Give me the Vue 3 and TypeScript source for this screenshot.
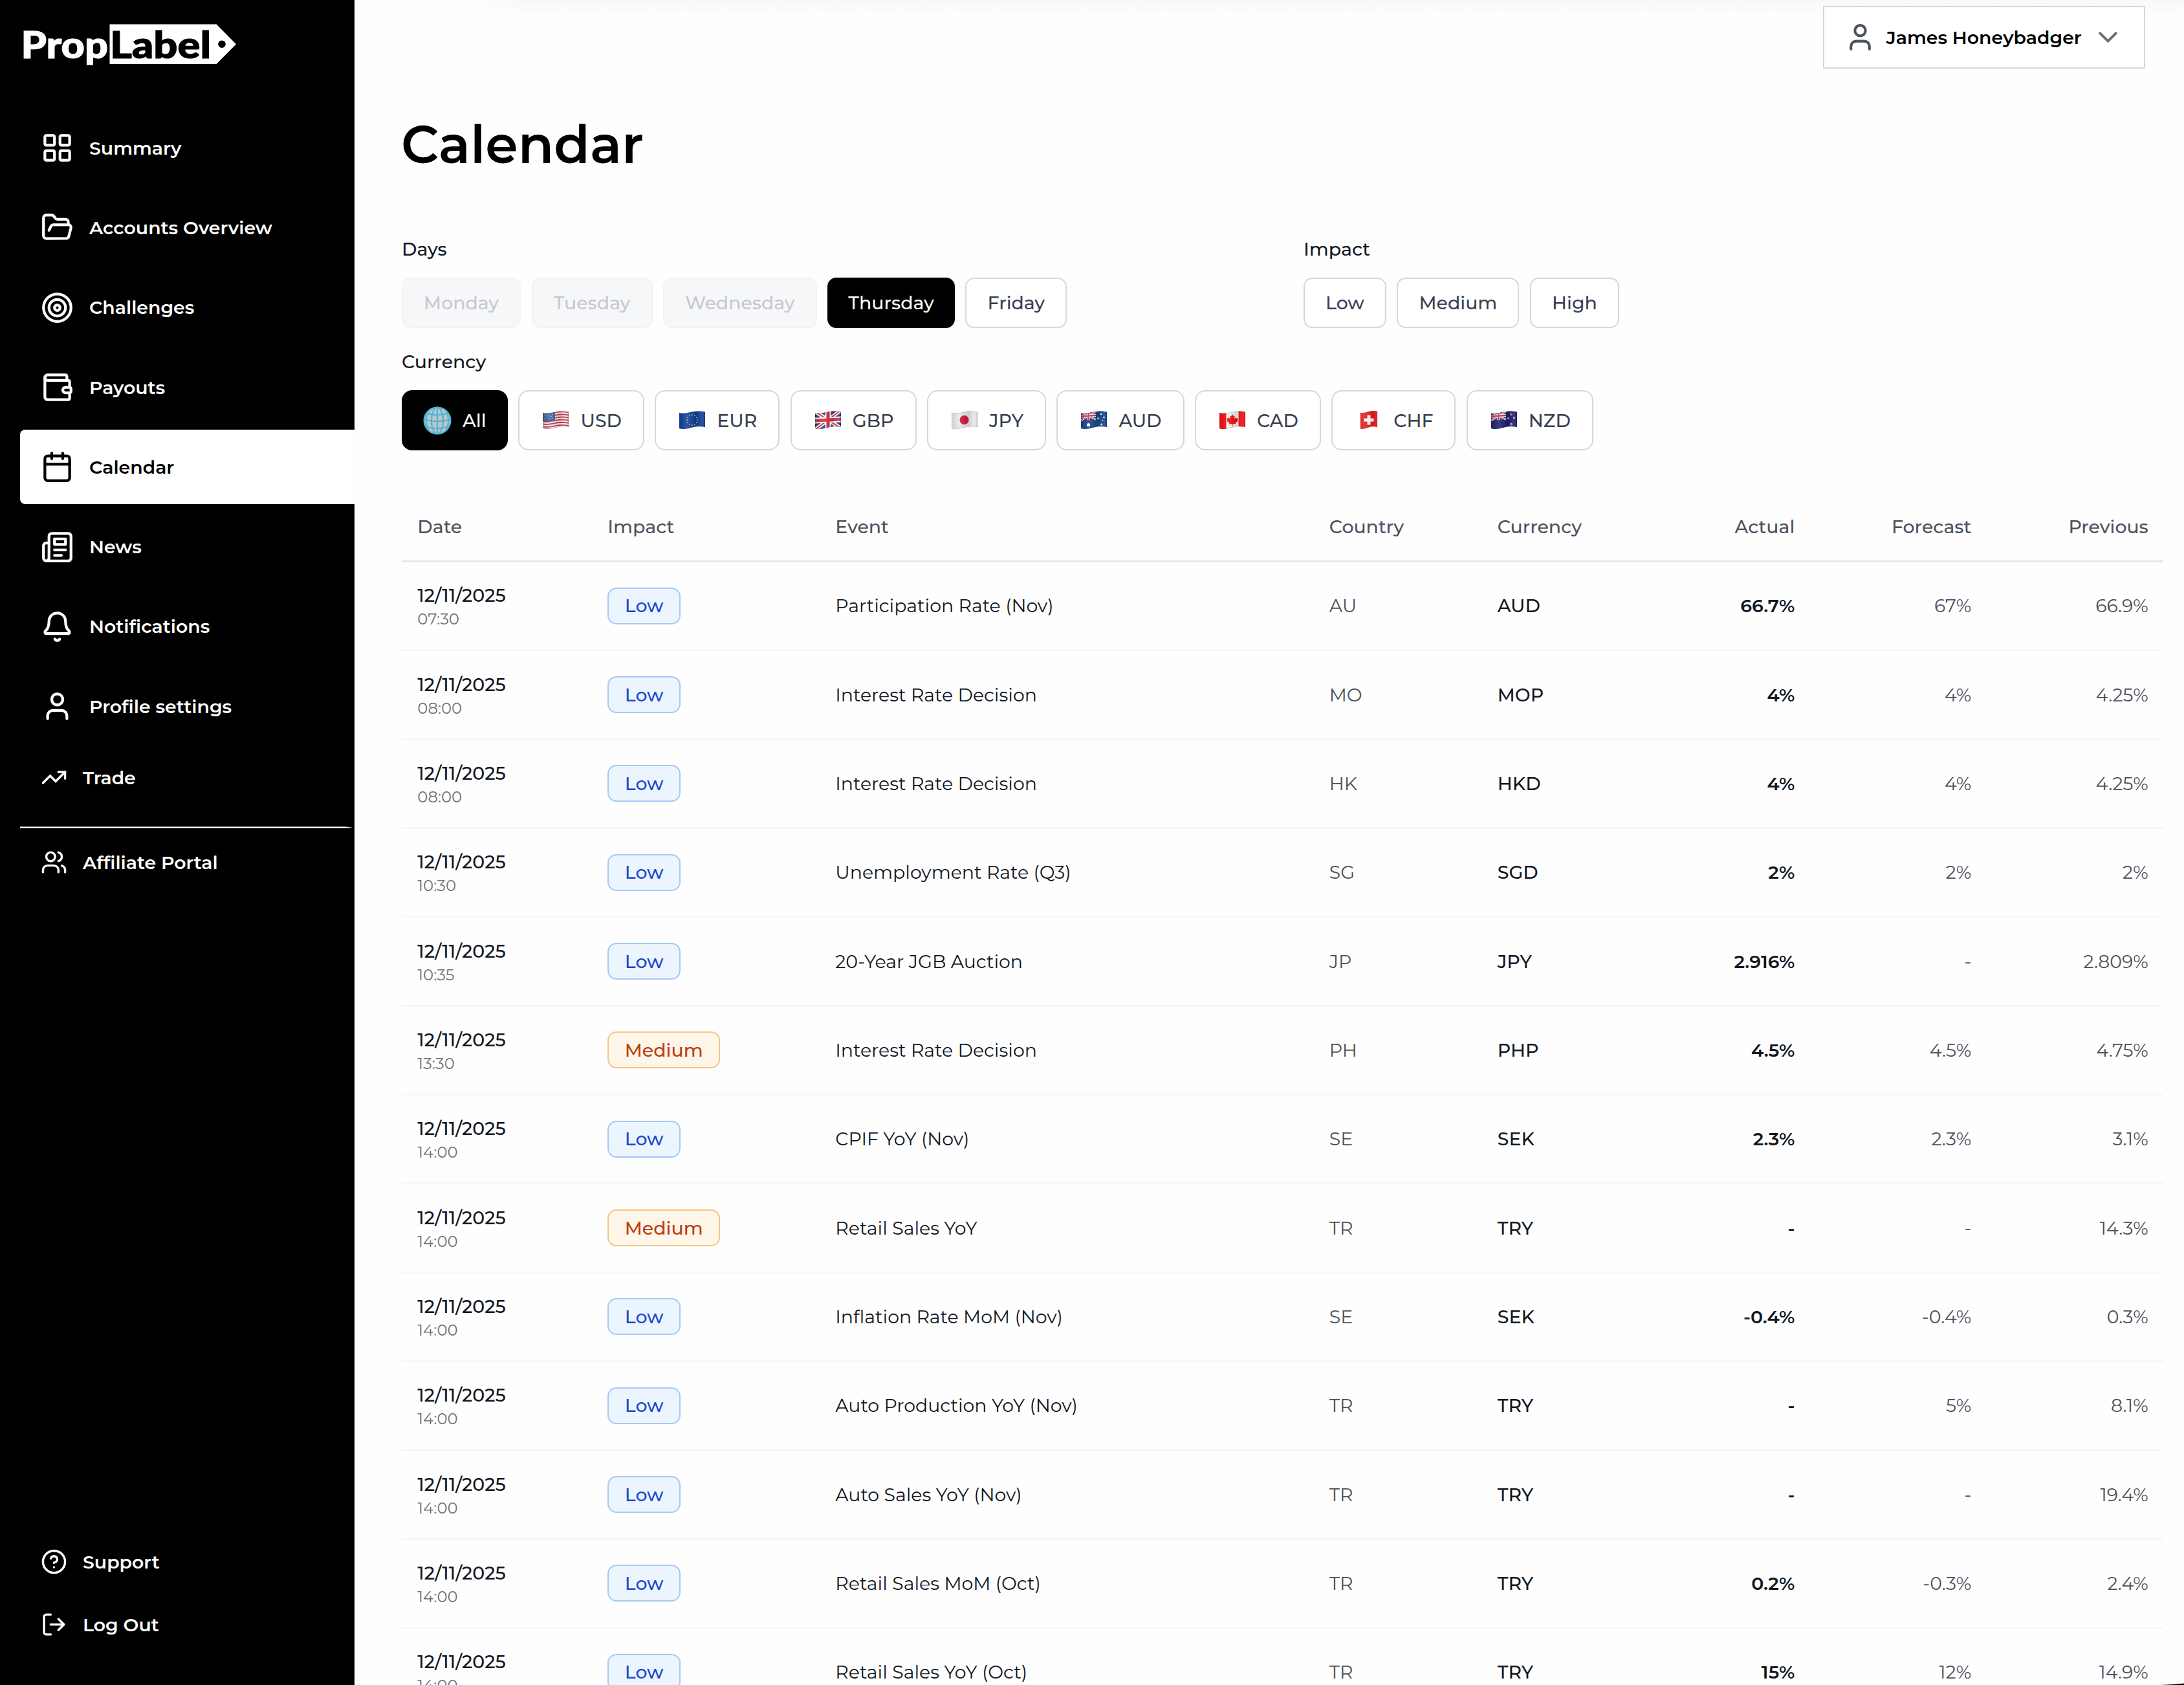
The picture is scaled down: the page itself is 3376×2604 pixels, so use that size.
<script setup lang="ts">
type NavItem = { label: string; icon: string; active?: boolean }

const navItems: NavItem[] = [
  { label: 'Summary', icon: '<rect x="3" y="3" width="7" height="7" rx="1"/><rect x="14" y="3" width="7" height="7" rx="1"/><rect x="14" y="14" width="7" height="7" rx="1"/><rect x="3" y="14" width="7" height="7" rx="1"/>' },
  { label: 'Accounts Overview', icon: '<path d="m6 14 1.5-2.9A2 2 0 0 1 9.24 10H20a2 2 0 0 1 1.94 2.5l-1.54 6a2 2 0 0 1-1.95 1.5H4a2 2 0 0 1-2-2V5a2 2 0 0 1 2-2h3.9a2 2 0 0 1 1.69.9l.81 1.2a2 2 0 0 0 1.67.9H18a2 2 0 0 1 2 2v2"/>' },
  { label: 'Challenges', icon: '<circle cx="12" cy="12" r="10"/><circle cx="12" cy="12" r="6"/><circle cx="12" cy="12" r="2"/>' },
  { label: 'Payouts', icon: '<path d="M19 7V4a1 1 0 0 0-1-1H5a2 2 0 0 0 0 4h15a1 1 0 0 1 1 1v4h-3a2 2 0 0 0 0 4h3a1 1 0 0 0 1-1v-2a1 1 0 0 0-1-1"/><path d="M3 5v14a2 2 0 0 0 2 2h15a1 1 0 0 0 1-1v-4"/>' },
  { label: 'Calendar', active: true, icon: '<path d="M8 2v4M16 2v4M3 10h18"/><rect x="3" y="4" width="18" height="18" rx="2"/>' },
  { label: 'News', icon: '<path d="M4 22h16a2 2 0 0 0 2-2V4a2 2 0 0 0-2-2H8a2 2 0 0 0-2 2v16a2 2 0 0 1-2 2Zm0 0a2 2 0 0 1-2-2v-9c0-1.1.9-2 2-2h2"/><path d="M18 14h-8M15 18h-5M10 6h8v4h-8V6Z"/>' },
  { label: 'Notifications', icon: '<path d="M10.268 21a2 2 0 0 0 3.464 0"/><path d="M3.262 15.326A1 1 0 0 0 4 17h16a1 1 0 0 0 .74-1.673C19.41 13.956 18 12.499 18 8A6 6 0 0 0 6 8c0 4.499-1.411 5.956-2.738 7.326"/>' },
  { label: 'Profile settings', icon: '<path d="M19 21v-2a4 4 0 0 0-4-4H9a4 4 0 0 0-4 4v2"/><circle cx="12" cy="7" r="4"/>' },
]

const iconTrade = '<path stroke-linejoin="miter" d="M22 7l-8.5 8.5-5-5L2 17"/><path stroke-linejoin="miter" d="M16 7h6v6"/>'
const iconUsers = '<path d="M16 21v-2a4 4 0 0 0-4-4H6a4 4 0 0 0-4 4v2"/><circle cx="9" cy="7" r="4"/><path d="M22 21v-2a4 4 0 0 0-3-3.87M16 3.13a4 4 0 0 1 0 7.75"/>'
const iconHelp = '<circle cx="12" cy="12" r="10"/><path d="M9.09 9a3 3 0 0 1 5.83 1c0 2-3 3-3 3M12 17h.01"/>'
const iconLogout = '<path d="M9 21H5a2 2 0 0 1-2-2V5a2 2 0 0 1 2-2h4M16 17l5-5-5-5M21 12H9"/>'

const days = [
  { label: 'Monday', state: 'disabled' },
  { label: 'Tuesday', state: 'disabled' },
  { label: 'Wednesday', state: 'disabled' },
  { label: 'Thursday', state: 'selected' },
  { label: 'Friday', state: '' },
]
const impacts = ['Low', 'Medium', 'High']

// The waving outline shared by every 40x28 flag.
const wave = 'M0 3C7 5 13 3 20 1.6S33 0 40 1.6V25C33 23.4 27 24 20 25.4S7 29.5 0 27Z'
const waveSquare = 'M7 3C12 4 16 2 20 1S28 -.5 33 .8V25C28 23.5 24 24 20 25.2S12 28.5 7 27.5Z'
const curve = 'M0 3C7 5 13 3 20 1.6S33 0 40 1.6'
const stripes = [1, 5.1, 9.2, 13.3, 17.4, 21.5, 25].map((y) => `<path d="${curve}" transform="translate(0 ${y - 0.2})" stroke="#c9364b" stroke-width="1.9" fill="none"/>`).join('')
const unionJack = (w: number, h: number) =>
  `<rect width="${w}" height="${h}" fill="#263c86"/><path d="M0 0L${w} ${h}M${w} 0L0 ${h}" stroke="#fff" stroke-width="${h * 0.2}"/><path d="M0 0L${w} ${h}M${w} 0L0 ${h}" stroke="#d22f45" stroke-width="${h * 0.07}"/><path d="M${w / 2} 0V${h}M0 ${h / 2}H${w}" stroke="#fff" stroke-width="${h * 0.32}"/><path d="M${w / 2} 0V${h}M0 ${h / 2}H${w}" stroke="#d22f45" stroke-width="${h * 0.18}"/>`
const dots = (pts: number[][], fill: string, stroke = 'none') =>
  pts.map(([x, y, r]) => `<circle cx="${x}" cy="${y}" r="${r}" fill="${fill}" stroke="${stroke}" stroke-width=".7"/>`).join('')
const euStars = Array.from({ length: 12 }, (_, i) => [20 + 8 * Math.sin((i * Math.PI) / 6), 14 - 8 * Math.cos((i * Math.PI) / 6), 0.9])

const currencies = [
  { code: 'USD', flag: `<rect width="40" height="30" fill="#f4eff0"/>${stripes}<path d="M0 3C7 5 13 3 19 1.8V14.5C13 16 7 18 0 16Z" fill="#3b5f9e"/>${dots([[3, 6.5, .7], [7, 6.8, .7], [11, 6.2, .7], [15, 5.2, .7], [5, 9.4, .7], [9, 9.2, .7], [13, 8.5, .7], [3, 12.4, .7], [7, 12.5, .7], [11, 11.8, .7], [15, 10.8, .7]], '#dfe7f3')}` },
  { code: 'EUR', flag: `<rect width="40" height="30" fill="#10409a"/>${dots(euStars, '#d9ca62')}` },
  { code: 'GBP', flag: `<g transform="translate(0 1) skewY(-3)">${unionJack(40, 28)}</g>` },
  { code: 'JPY', flag: '<rect width="40" height="30" fill="#e9e9e9"/><circle cx="19.5" cy="14" r="7" fill="#d3133c"/>' },
  { code: 'AUD', flag: `<rect width="40" height="30" fill="#164588"/><g transform="translate(0 2) skewY(-4)">${unionJack(23, 13)}</g>${dots([[11.5, 21.5, 2.6], [31, 5, 1.3], [26.5, 11.5, 1.3], [35.5, 10, 1.3], [31.5, 21, 1.4], [33.5, 14.5, .8]], '#fff')}` },
  { code: 'CAD', flag: '<rect width="40" height="30" fill="#f3f3f3"/><path d="M0 0H10.5V30H0ZM29.5 0H40V30H29.5Z" fill="#f20d12"/><path d="M20 5l1.8 3.4 2-1-.8 5 2.6-2.4.6 1.6 2.6-.3-1 3 1.2.9-4.4 3.6.4 1.6-4.4-.5V23.5h-1.2v-3.6l-4.4.5.4-1.6-4.4-3.6 1.2-.9-1-3 2.6.3.6-1.6 2.6 2.4-.8-5 2 1Z" fill="#f20d12"/>' },
  { code: 'CHF', flag: '<rect x="7" width="26" height="30" fill="#ea1b1f"/><path d="M20 6.5v15M12.5 14h15" stroke="#fff" stroke-width="5"/>', square: true },
  { code: 'NZD', flag: `<rect width="40" height="30" fill="#1b1f70"/><g transform="translate(0 2) skewY(-4)">${unionJack(23, 13)}</g>${dots([[31, 5.5, 1.3], [26.5, 11.5, 1.3], [35.5, 10.5, 1.3], [31, 20.5, 1.6]], '#d9264a', '#fff')}` },
]

const columns = [
  { label: 'Date', cls: '' },
  { label: 'Impact', cls: '' },
  { label: 'Event', cls: '' },
  { label: 'Country', cls: '' },
  { label: 'Currency', cls: '' },
  { label: 'Actual', cls: 'right' },
  { label: 'Forecast', cls: 'right' },
  { label: 'Previous', cls: 'right' },
]

type Impact = 'Low' | 'Medium'
type Row = [time: string, impact: Impact, event: string, country: string, currency: string, actual: string, forecast: string, previous: string]

const rows: Row[] = [
  ['07:30', 'Low', 'Participation Rate (Nov)', 'AU', 'AUD', '66.7%', '67%', '66.9%'],
  ['08:00', 'Low', 'Interest Rate Decision', 'MO', 'MOP', '4%', '4%', '4.25%'],
  ['08:00', 'Low', 'Interest Rate Decision', 'HK', 'HKD', '4%', '4%', '4.25%'],
  ['10:30', 'Low', 'Unemployment Rate (Q3)', 'SG', 'SGD', '2%', '2%', '2%'],
  ['10:35', 'Low', '20-Year JGB Auction', 'JP', 'JPY', '2.916%', '-', '2.809%'],
  ['13:30', 'Medium', 'Interest Rate Decision', 'PH', 'PHP', '4.5%', '4.5%', '4.75%'],
  ['14:00', 'Low', 'CPIF YoY (Nov)', 'SE', 'SEK', '2.3%', '2.3%', '3.1%'],
  ['14:00', 'Medium', 'Retail Sales YoY', 'TR', 'TRY', '-', '-', '14.3%'],
  ['14:00', 'Low', 'Inflation Rate MoM (Nov)', 'SE', 'SEK', '-0.4%', '-0.4%', '0.3%'],
  ['14:00', 'Low', 'Auto Production YoY (Nov)', 'TR', 'TRY', '-', '5%', '8.1%'],
  ['14:00', 'Low', 'Auto Sales YoY (Nov)', 'TR', 'TRY', '-', '-', '19.4%'],
  ['14:00', 'Low', 'Retail Sales MoM (Oct)', 'TR', 'TRY', '0.2%', '-0.3%', '2.4%'],
  ['14:00', 'Low', 'Retail Sales YoY (Oct)', 'TR', 'TRY', '15%', '12%', '14.9%'],
]
</script>

<template>
  <div class="app">
    <aside class="sidebar">
      <svg class="logo" width="340" height="80" viewBox="31 29.5 340 80">
        <path d="M169.5 37H334.5L365 67.7 334.5 98.5H169.5Z" fill="#fff" />
        <circle cx="343" cy="67.7" r="5.8" fill="#000" />
        <text x="32.5" y="89" textLength="134.5" lengthAdjust="spacingAndGlyphs" fill="#fff" stroke="#fff">Prop</text>
        <text x="170" y="89" textLength="156" lengthAdjust="spacingAndGlyphs" fill="#000" stroke="#000">Label</text>
      </svg>

      <nav class="nav">
        <a v-for="item in navItems" :key="item.label" class="nav-item" :class="{ active: item.active }">
          <svg class="icon" width="51" height="51" viewBox="0 0 24 24" v-html="item.icon"></svg>
          <span>{{ item.label }}</span>
        </a>
      </nav>

      <div class="nav-small trade">
        <svg class="icon" width="41" height="41" viewBox="0 0 24 24" v-html="iconTrade"></svg>
        <span>Trade</span>
      </div>
      <div class="divider"></div>
      <div class="nav-small">
        <svg class="icon" width="41" height="41" viewBox="0 0 24 24" v-html="iconUsers"></svg>
        <span>Affiliate Portal</span>
      </div>

      <div class="bottom">
        <div class="nav-small">
          <svg class="icon" width="41" height="41" viewBox="0 0 24 24" v-html="iconHelp"></svg>
          <span>Support</span>
        </div>
        <div class="nav-small">
          <svg class="icon" width="41" height="41" viewBox="0 0 24 24" v-html="iconLogout"></svg>
          <span>Log Out</span>
        </div>
      </div>
    </aside>

    <main class="main">
      <header class="topbar">
        <button class="user">
          <svg class="icon user-icon" width="49" height="49" viewBox="0 0 24 24">
            <path d="M19 21v-2a4 4 0 0 0-4-4H9a4 4 0 0 0-4 4v2" />
            <circle cx="12" cy="7" r="4" />
          </svg>
          <span class="user-name">James Honeybadger</span>
          <svg class="icon chevron" width="49" height="49" viewBox="0 0 24 24"><path d="m6 9 6 6 6-6" /></svg>
        </button>
      </header>

      <h1 class="title">Calendar</h1>

      <section class="filters">
        <div class="group">
          <div class="label">Days</div>
          <div class="pills">
            <button v-for="d in days" :key="d.label" class="pill" :class="d.state">{{ d.label }}</button>
          </div>
        </div>
        <div class="group">
          <div class="label">Impact</div>
          <div class="pills">
            <button v-for="i in impacts" :key="i" class="pill">{{ i }}</button>
          </div>
        </div>
      </section>

      <section class="group currency">
        <div class="label">Currency</div>
        <div class="pills">
          <button class="pill tall selected all">
            <svg width="44" height="44" viewBox="0 0 44 44">
              <circle cx="22" cy="22" r="20.5" fill="#b9c6cc" />
              <g fill="none" stroke="#4fb3d4" stroke-width="2.2">
                <circle cx="22" cy="22" r="20.4" />
                <ellipse cx="22" cy="22" rx="9" ry="20.3" />
                <path d="M9 6C3.5 16 3.5 28 9 38M35 6C40.5 16 40.5 28 35 38" />
                <path d="M22 2V42M2 20C12 24 32 24 42 20M6 10C14 14.5 30 14.5 38 10M4 31C13 35 31 35 40 31" />
              </g>
            </svg>
            <span>All</span>
          </button>
          <button v-for="c in currencies" :key="c.code" class="pill tall">
            <svg width="40" height="29" viewBox="0 0 40 29">
              <defs>
                <clipPath :id="'flag-' + c.code"><path :d="c.square ? waveSquare : wave" /></clipPath>
                <linearGradient :id="'fold-' + c.code">
                  <stop offset="0" stop-color="#000" stop-opacity=".1" />
                  <stop offset=".3" stop-color="#fff" stop-opacity=".12" />
                  <stop offset=".65" stop-color="#000" stop-opacity=".12" />
                  <stop offset=".9" stop-color="#fff" stop-opacity=".1" />
                  <stop offset="1" stop-color="#000" stop-opacity=".2" />
                </linearGradient>
              </defs>
              <g :clip-path="`url(#flag-${c.code})`">
                <g v-html="c.flag"></g>
                <rect width="40" height="30" :fill="`url(#fold-${c.code})`" />
              </g>
              <path :d="c.square ? waveSquare : wave" fill="none" stroke="#000" stroke-opacity=".15" />
            </svg>
            <span>{{ c.code }}</span>
          </button>
        </div>
      </section>

      <section class="table">
        <div class="tr head">
          <div v-for="col in columns" :key="col.label" :class="col.cls">{{ col.label }}</div>
        </div>
        <div v-for="([time, impact, event, country, currency, actual, forecast, previous], i) in rows" :key="i" class="tr">
          <div>
            <div class="day">12/11/2025</div>
            <div class="time">{{ time }}</div>
          </div>
          <div><span class="badge" :class="impact.toLowerCase()">{{ impact }}</span></div>
          <div>{{ event }}</div>
          <div class="muted">{{ country }}</div>
          <div class="strong">{{ currency }}</div>
          <div class="right actual">{{ actual }}</div>
          <div class="right muted">{{ forecast }}</div>
          <div class="right muted">{{ previous }}</div>
        </div>
      </section>
    </main>

    <svg class="corner" width="36" height="3" viewBox="0 0 36 3"><path d="M0 3C14 2.6 26 1.8 36 .6V3Z" /></svg>
  </div>
</template>

<style>
html,
body {
  margin: 0;
  overflow: hidden;
  background: #fff;
}
</style>

<style scoped>
.app {
  position: relative;
  display: flex;
  width: 3376px;
  height: 2604px;
  overflow: hidden;
  background: #fefefe;
  font-family: Montserrat, Inter, sans-serif;
  font-size: 28.35px;
  line-height: 40px;
  color: #111722;
  white-space: nowrap;
}
.corner {
  position: absolute;
  right: 0;
  bottom: 0;
}
button {
  font: inherit;
  color: inherit;
  padding: 0;
  margin: 0;
  box-sizing: border-box;
}
.icon {
  fill: none;
  stroke: currentColor;
  stroke-width: 2;
  stroke-linecap: round;
  stroke-linejoin: round;
  flex: none;
}

/* Sidebar */
.sidebar {
  flex: none;
  display: flex;
  flex-direction: column;
  box-sizing: border-box;
  width: 548px;
  height: 2604px;
  padding: 30px 0 45px 31px;
  background: #000;
  color: #fff;
  font-weight: 600;
}
.logo {
  flex: none;
  font-family: Lato, sans-serif;
  font-weight: 900;
  font-size: 58px;
  stroke-width: 1.2;
}
.logo path,
.logo circle {
  stroke: none;
}
.nav {
  display: flex;
  flex-direction: column;
  gap: 8px;
  margin-top: 61px;
}
.nav-item {
  display: flex;
  align-items: center;
  gap: 24px;
  height: 115.3px;
  padding-left: 32px;
  border-radius: 8px 0 0 8px;
}
.nav-item.active {
  background: #fff;
  color: #000;
}
.nav-small {
  display: flex;
  align-items: center;
  gap: 24px;
  height: 97px;
  padding-left: 32px;
}
.trade {
  margin-top: 4px;
}
.divider {
  height: 3px;
  margin: 27px 3px 4px 0;
  background: #f4f4f4;
  clip-path: polygon(0 0, 97.5% 0, 100% 33%, 97.5% 100%, 0 100%);
}
.bottom {
  margin-top: auto;
}

/* Main column */
.main {
  flex: 1;
  min-width: 0;
  padding: 0 32px 0 73px;
  background:
    linear-gradient(to right, #fefefe 170px, transparent 260px) 0 0 / 300px 26px no-repeat,
    linear-gradient(to bottom, #f8f8f8, #fefefe) 0 0 / 100% 26px no-repeat;
}
.topbar {
  display: flex;
  justify-content: flex-end;
  padding: 9px 28px 0 0;
}
.user {
  display: flex;
  align-items: center;
  width: 498px;
  height: 97px;
  padding-left: 31px;
  border: 2px solid #d3d6d8;
  background: #fff;
  color: #000;
  font-weight: 600;
}
.user-icon {
  color: #4b5260;
  margin-right: 15.5px;
}
.user-name {
  width: 302.5px;
}
.chevron {
  color: #6b7078;
  margin-left: 16px;
}
.title {
  margin: 69px 0 0 -1px;
  font-size: 81px;
  line-height: 96px;
  font-weight: 600;
  color: #000;
}
.filters {
  display: grid;
  grid-template-columns: 1394px auto;
  margin-top: 94px;
}
.group {
  display: flex;
  flex-direction: column;
  gap: 24px;
}
.label {
  height: 40px;
  font-weight: 500;
}
.pills {
  display: flex;
  gap: 16.5px;
}
.pill {
  display: flex;
  align-items: center;
  justify-content: center;
  height: 78px;
  padding: 0 32.1px;
  border: 2px solid #d5d8da;
  border-radius: 14px;
  background: #fff;
  color: #374151;
  font-weight: 500;
}
.pill.disabled {
  border-color: #f1f2f4;
  background: #f6f7f9;
  color: #c6c9cd;
}
.pill.selected {
  padding: 0 30px;
  border-color: #000;
  background: #000;
  color: #fff;
}
.currency {
  margin-top: 32px;
}
.currency .pills {
  gap: 16.4px;
}
.pill.tall {
  gap: 18px;
  height: 93px;
  padding: 0 33px 0 36px;
  border-radius: 16px;
}
.pill.tall.all {
  gap: 17px;
  padding: 0 31.5px 0 31px;
}

/* Events table */
.table {
  margin-top: 65px;
}
.tr {
  display: grid;
  grid-template-columns: 294px 352px 763.5px 260px 200px 259.5px 273px 273.5px;
  align-items: center;
  box-sizing: border-box;
  width: 2723px;
  height: 137.35px;
  padding-left: 24.3px;
  border-bottom: 3px solid #f6f7f8;
}
.tr.head {
  height: 108px;
  border-bottom: 3px solid #e6e7e9;
  color: #4b525e;
  font-weight: 500;
}
.right {
  text-align: right;
}
.day {
  font-weight: 500;
}
.time {
  font-size: 24.3px;
  line-height: 32px;
  color: #6f7379;
}
.badge {
  display: inline-flex;
  align-items: center;
  justify-content: center;
  box-sizing: border-box;
  height: 57px;
  padding: 0 24.5px;
  border: 2px solid #a5caf5;
  border-radius: 14px;
  background: #ecf5fe;
  color: #1d48d0;
  font-weight: 500;
  vertical-align: middle;
}
.badge.medium {
  border-color: #f5c585;
  background: #fff6ea;
  color: #c03c0c;
}
.muted {
  color: #4b515b;
}
.strong {
  font-weight: 500;
}
.actual {
  font-weight: 600;
}
</style>
